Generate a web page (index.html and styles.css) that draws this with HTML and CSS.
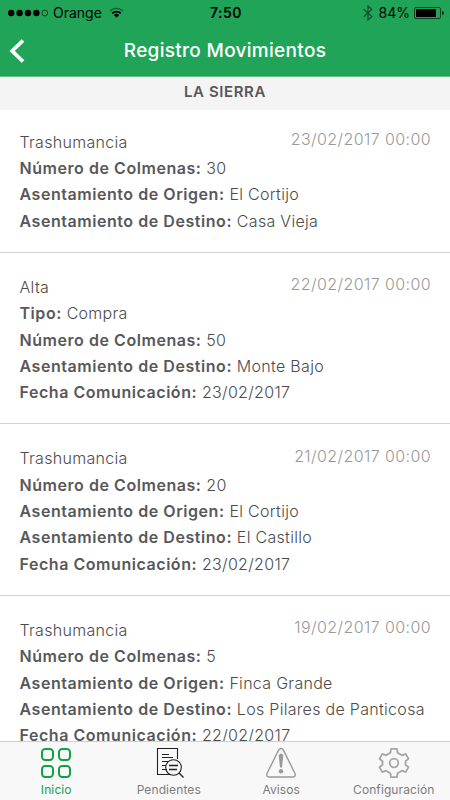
FILE: index.html
```html
<!DOCTYPE html>
<html lang="es">
<head>
    <meta charset="UTF-8">
    <meta name="viewport" content="width=device-width, initial-scale=1.0">
    <title>Registro Movimientos</title>
    <link rel="stylesheet" href="styles.css">
</head>
<body>
    <header class="header">
        <div class="status-bar">
            <div class="status-left">
                <svg class="signal" width="41" height="8" viewBox="0 0 41 8">
                    <circle cx="3.2" cy="4" r="3.2"/>
                    <circle cx="11.6" cy="4" r="3.2"/>
                    <circle cx="20" cy="4" r="3.2"/>
                    <circle cx="28.4" cy="4" r="3.2"/>
                    <circle cx="36.8" cy="4" r="2.9" fill="none" stroke="#000" stroke-width="0.6"/>
                </svg>
                <span class="carrier">Orange</span>
                <svg class="wifi" width="15" height="11" viewBox="0 0 15 11" fill="none" stroke="#000">
                    <path d="M1 4.1a9.2 9.2 0 0 1 13 0" stroke-width="1.4" opacity="0.45"/>
                    <path d="M3.2 6.4a6.1 6.1 0 0 1 8.6 0" stroke-width="1.7"/>
                    <path d="M4.9 8a3.7 3.7 0 0 1 5.2 0L7.5 10.7z" fill="#000" stroke="none"/>
                </svg>
            </div>
            <span class="time">7:50</span>
            <div class="status-right">
                <svg width="10" height="16" viewBox="0 0 10 16" fill="none" stroke="#000" stroke-width="1.2" opacity="0.5">
                    <path d="M0.6 4.3l8.2 7.3L5 15V1l3.8 3.5L0.6 11.8"/>
                </svg>
                <span class="percent">84%</span>
                <svg class="battery" width="30" height="12" viewBox="0 0 30 12">
                    <rect x="0.5" y="0.5" width="26" height="11" rx="1.5" fill="none" stroke="#000" opacity="0.6"/>
                    <rect x="2" y="2" width="20" height="8"/>
                    <path d="M28 4a2 2 0 0 1 0 4z" opacity="0.7"/>
                </svg>
            </div>
        </div>
        <div class="nav-bar">
            <svg class="back" width="16" height="24" viewBox="0 0 16 24" fill="none" stroke="#fff" stroke-width="3.8">
                <path d="M14 1.5L3.2 12L14 22.5"/>
            </svg>
            <h1>Registro Movimientos</h1>
        </div>
    </header>

    <div class="section-title">LA SIERRA</div>

    <main class="list">
        <div class="item first">
            <span class="date">23/02/2017 00:00</span>
            <p class="kind">Trashumancia</p>
            <p><b>Número de Colmenas:</b> 30</p>
            <p><b>Asentamiento de Origen:</b> El Cortijo</p>
            <p><b>Asentamiento de Destino:</b> Casa Vieja</p>
        </div>
        <div class="item">
            <span class="date">22/02/2017 00:00</span>
            <p class="kind">Alta</p>
            <p><b>Tipo:</b> Compra</p>
            <p><b>Número de Colmenas:</b> 50</p>
            <p><b>Asentamiento de Destino:</b> Monte Bajo</p>
            <p><b>Fecha Comunicación:</b> 23/02/2017</p>
        </div>
        <div class="item">
            <span class="date">21/02/2017 00:00</span>
            <p class="kind">Trashumancia</p>
            <p><b>Número de Colmenas:</b> 20</p>
            <p><b>Asentamiento de Origen:</b> El Cortijo</p>
            <p><b>Asentamiento de Destino:</b> El Castillo</p>
            <p><b>Fecha Comunicación:</b> 23/02/2017</p>
        </div>
        <div class="item">
            <span class="date">19/02/2017 00:00</span>
            <p class="kind">Trashumancia</p>
            <p><b>Número de Colmenas:</b> 5</p>
            <p><b>Asentamiento de Origen:</b> Finca Grande</p>
            <p><b>Asentamiento de Destino:</b> Los Pilares de Panticosa</p>
            <p><b>Fecha Comunicación:</b> 22/02/2017</p>
        </div>
    </main>

    <nav class="tabs">
        <a class="tab active">
            <svg width="32" height="32" viewBox="0 0 32 32" fill="none" stroke="#12a04b" stroke-width="2">
                <rect x="2" y="2" width="11" height="11" rx="3.2"/>
                <rect x="19" y="2" width="11" height="11" rx="3.2"/>
                <rect x="2" y="19" width="11" height="11" rx="3.2"/>
                <rect x="19" y="19" width="11" height="11" rx="3.2"/>
            </svg>
            <span>Inicio</span>
        </a>
        <a class="tab">
            <svg width="32" height="32" viewBox="0 0 32 32" fill="none" stroke="#222" stroke-width="1.1">
                <path d="M24.5 12V1.5h-20v26h13.5"/>
                <path d="M9 7.5h7M9 10.5h11M9 14.5h6M9 18.5h4M9 22.5h5"/>
                <circle cx="20.5" cy="20.5" r="7.8"/>
                <path d="M16 18.5h9M16 22.5h8M26 26l4.5 4.5" stroke-width="1.4"/>
            </svg>
            <span>Pendientes</span>
        </a>
        <a class="tab">
            <svg width="32" height="32" viewBox="0 0 32 32" fill="none" stroke="#999" stroke-width="1.4">
                <path d="M13.7 2.9Q16 0 18.3 2.9L30 26.5Q31 30 27.5 30h-23Q1 30 2 26.5z"/>
                <path d="M13.7 8.2Q16 5 18.3 8.2L17 20.5h-2z" fill="#999" stroke="none"/>
                <circle cx="16" cy="24.2" r="2.2" fill="#999" stroke="none"/>
            </svg>
            <span>Avisos</span>
        </a>
        <a class="tab">
            <svg width="32" height="32" viewBox="0 0 32 32" fill="none" stroke="#a6a6a6" stroke-width="1.8" stroke-linejoin="round">
                <path d="M13 1.8h6l.6 4 4.4 2.5 3.7-1.4 2.8 5-3 2.4v3.4l3 2.4-2.8 5-3.7-1.4-4.4 2.5-.6 4h-6l-.6-4L8 23.7l-3.7 1.4-2.8-5 3-2.4v-3.4l-3-2.4 2.8-5L8 8.3l4.4-2.5z"/>
                <circle cx="16" cy="16" r="4.3"/>
            </svg>
            <span>Configuración</span>
        </a>
    </nav>
</body>
</html>
```
FILE: styles.css
```css
* {
    box-sizing: border-box;
}
body {
    margin: 0;
    height: 800px;
    display: flex;
    flex-direction: column;
    overflow: hidden;
    background: #fff;
    color: #4c4c4c;
    font-family: Inter, "Liberation Sans", sans-serif;
}
.header {
    flex: none;
    height: 77px;
    background: #20a457;
    border-bottom: 1px solid #6fbd8e;
}
.status-bar {
    display: grid;
    grid-template-columns: 1fr auto 1fr;
    align-items: center;
    height: 25px;
    padding: 0 6px 0 8px;
    color: #000;
    font-size: 14px;
}
.status-left,
.status-right {
    display: flex;
    align-items: center;
}
.status-right {
    justify-content: flex-end;
}
.carrier {
    margin: 0 7px 0 4px;
}
.time {
    font-weight: 600;
    letter-spacing: 0.5px;
}
.percent {
    margin: 0 4px 0 6px;
}
.nav-bar {
    display: grid;
    grid-template-columns: 30px 1fr 30px;
    align-items: center;
    height: 51px;
}
.back {
    margin-left: 9px;
}
h1 {
    margin: 0;
    color: #fff;
    font-size: 19px;
    font-weight: 500;
    letter-spacing: 0.3px;
    text-align: center;
}
.section-title {
    flex: none;
    height: 33px;
    line-height: 30px;
    background: #f4f4f4;
    color: #58585a;
    font-size: 15px;
    font-weight: 600;
    letter-spacing: 0.6px;
    text-align: center;
}
.list {
    flex: 1;
    min-height: 0;
    overflow: hidden;
}
.item {
    padding: 21.2px 19px 17.3px 19.5px;
    border-bottom: 1px solid #d3d3d3;
    font-size: 16px;
    font-weight: 300;
    letter-spacing: 0.3px;
    line-height: 26.4px;
}
.item.first {
    padding-top: 18.6px;
}
.item p {
    margin: 0;
}
.item b {
    color: #58585a;
    font-weight: 600;
    letter-spacing: 0.55px;
}
.date {
    float: right;
    margin-top: -2.4px;
    color: #999;
    letter-spacing: 0.4px;
}
.tabs {
    flex: none;
    display: grid;
    grid-template-columns: repeat(4, 1fr);
    height: 59px;
    padding-top: 5px;
    background: #f8f8f8;
    border-top: 1px solid #d0d0d0;
}
.tab {
    display: flex;
    flex-direction: column;
    align-items: center;
    color: #7c7c7c;
    font-size: 12px;
    letter-spacing: 0.1px;
    line-height: 22px;
}
.tab.active {
    color: #12a04b;
}
```
